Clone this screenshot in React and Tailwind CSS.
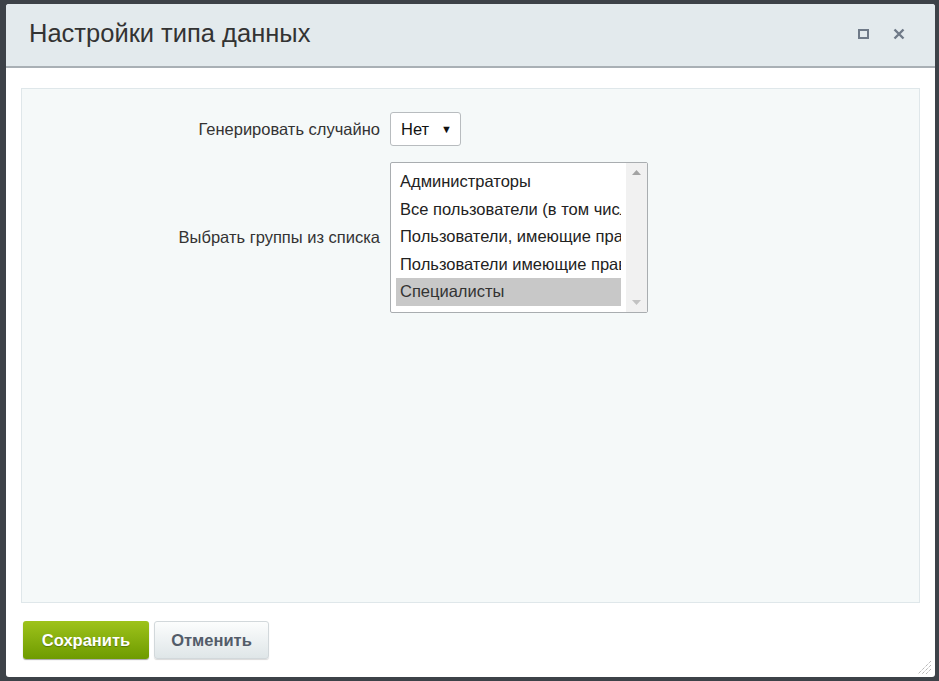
import React from "react";

export default function App() {
  const items = [
    "Администраторы",
    "Все пользователи (в том числе неавторизованные)",
    "Пользователи, имеющие право голосовать за рейтинг",
    "Пользователи имеющие право голосовать за авторитет",
    "Специалисты",
  ];
  return (
    <div
      className="w-[939px] h-[681px] bg-[#3d4248] pt-[4px] pl-[6px] overflow-hidden"
      style={{ fontFamily: '"Liberation Sans", Arial, sans-serif' }}
    >
      <div className="w-[929px] h-[673px] bg-white rounded-[3px] flex flex-col relative">
        {/* header */}
        <div className="h-[64px] bg-[#e3eaed] border-b-2 border-[#a9b0b5] rounded-t-[3px] flex items-center pl-[23px] pr-[30px] shrink-0">
          <div className="text-[25.5px] text-[#333] leading-none flex-1 pb-[3px]">
            Настройки типа данных
          </div>
          <div className="flex items-center gap-[24px] pb-[2px]">
            <div className="w-[11px] h-[10px] border-2 border-[#6f7a88]" />
            <svg width="12" height="12" viewBox="0 0 12 12">
              <path d="M1.5 1.5 L10.5 10.5 M10.5 1.5 L1.5 10.5" stroke="#6f7a88" strokeWidth="2.4" />
            </svg>
          </div>
        </div>
        {/* body */}
        <div className="flex-1 px-[15px] pt-[20px] pb-[18px] flex flex-col">
          <div className="flex-1 bg-[#f5f9f9] border border-[#dfe7ea] pt-[23px]">
            <div className="flex items-center h-[34px]">
              <div className="w-[368px] text-right text-[16.5px] text-[#333] pr-[10px]">
                Генерировать случайно
              </div>
              <div className="w-[71px] h-[34px] bg-white border border-[#b8bcbf] rounded-[3px] flex items-center pl-[10px] pr-[8px] justify-between text-[16.5px] text-[#111]">
                <span>Нет</span>
                <span className="text-[11px]">▼</span>
              </div>
            </div>
            <div className="flex items-center mt-[16px]">
              <div className="w-[368px] text-right text-[16.5px] text-[#333] pr-[10px]">
                Выбрать группы из списка
              </div>
              <div className="w-[258px] h-[151px] bg-white border border-[#a9adb0] rounded-[2px] flex">
                <div className="flex-1 pt-[5px] pl-[5px] pr-[5px] overflow-hidden">
                  {items.map((t, i) => (
                    <div
                      key={i}
                      className={
                        "h-[27.6px] leading-[27px] text-[16.5px] pl-[4px] whitespace-nowrap overflow-hidden " +
                        (i === 4 ? "bg-[#c8c8c8] text-[#333]" : "text-[#222]")
                      }
                    >
                      {t}
                    </div>
                  ))}
                </div>
                <div className="w-[21px] bg-[#f1f1f1] flex flex-col items-center justify-between py-[7px]">
                  <svg width="9" height="5" viewBox="0 0 9 5">
                    <path d="M0 5 L4.5 0 L9 5 Z" fill="#a3a3a3" />
                  </svg>
                  <svg width="9" height="5" viewBox="0 0 9 5">
                    <path d="M0 0 L4.5 5 L9 0 Z" fill="#c2c2c2" />
                  </svg>
                </div>
              </div>
            </div>
          </div>
          <div className="flex gap-[5px] mt-[18px] pl-[2px]">
            <button className="w-[126px] h-[38px] rounded-[3px] bg-gradient-to-b from-[#9ec31a] to-[#6e9b00] text-white font-bold text-[16.5px] shadow-[0_1px_1px_rgba(0,0,0,0.35)] [text-shadow:0_1px_1px_rgba(0,0,0,0.3)]">
              Сохранить
            </button>
            <button className="w-[115px] h-[38px] rounded-[3px] bg-gradient-to-b from-[#fcfdfd] to-[#dfe6e8] border border-[#d2d8db] text-[#535c69] font-bold text-[16.5px] shadow-[0_1px_1px_rgba(0,0,0,0.15)]">
              Отменить
            </button>
          </div>
        </div>
        <svg className="absolute right-[3px] bottom-[2px]" width="15" height="15" viewBox="0 0 15 15">
          <path d="M14 1 L1 14 M14 5 L5 14 M14 9 L9 14" stroke="#9a9a9a" strokeWidth="1" strokeDasharray="1 1" />
        </svg>
      </div>
    </div>
  );
}
